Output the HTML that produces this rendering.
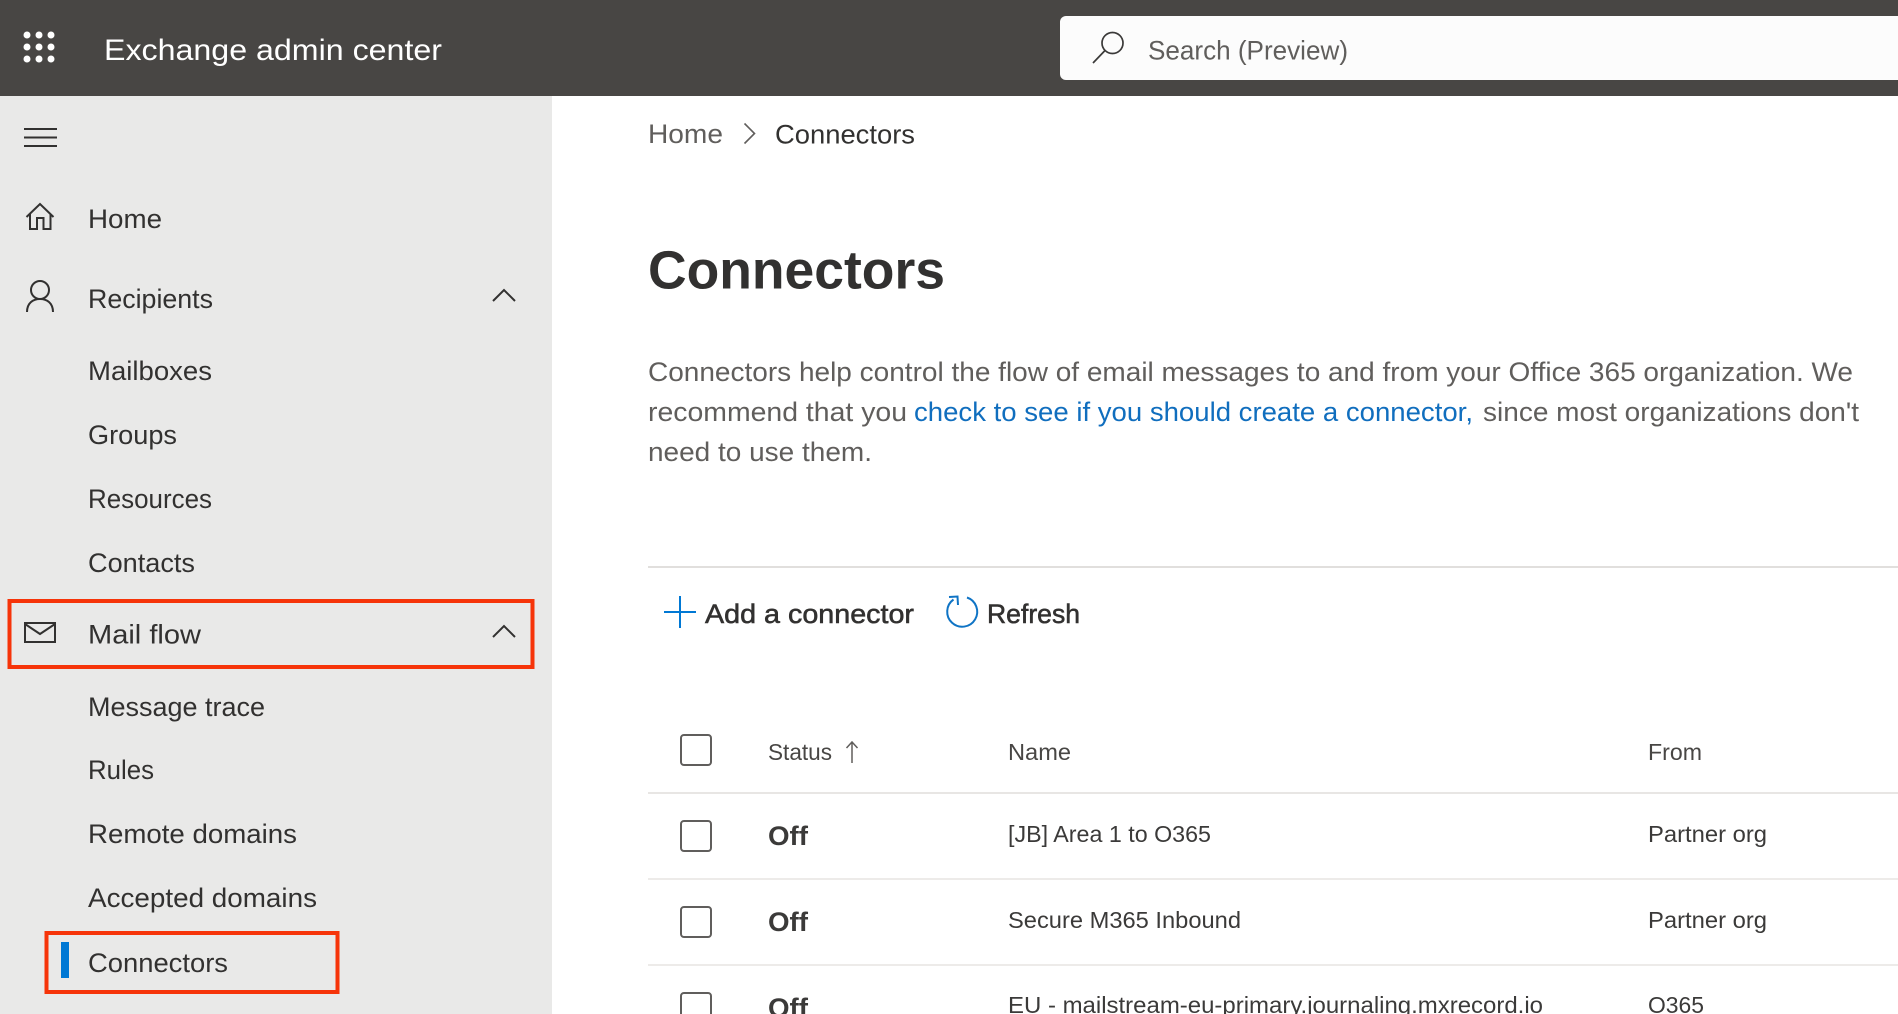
<!DOCTYPE html>
<html lang="en">
<head>
<meta charset="utf-8">
<title>Exchange admin center - Connectors</title>
<style>
html,body{margin:0;padding:0;width:1898px;height:1014px;overflow:hidden;background:#fff}
svg{display:block;position:absolute;left:0;top:0}
text{font-family:"Liberation Sans",Arial,sans-serif;white-space:pre}
.n{font-size:27px;fill:#323130}
.p{font-size:27px;fill:#605e5c}
.l{font-size:27px;fill:#106ebe}
.t{font-size:23.5px;fill:#3b3a39}
.h{font-size:23.5px;fill:#484644}
.o{font-size:27px;font-weight:bold;fill:#3b3a39}
.a{font-size:27px;fill:#323130;stroke:#323130;stroke-width:.55px}
.i{fill:none;stroke:#323130;stroke-width:2}
.c{fill:#fff;stroke:#605e5c;stroke-width:2}
</style>
</head>
<body>
<svg width="1898" height="1014" viewBox="0 0 1898 1014" xmlns="http://www.w3.org/2000/svg">
<rect width="1898" height="1014" fill="#fff"/>
<rect width="1898" height="96" fill="#484644"/>
<rect y="96" width="552" height="918" fill="#e9e9e8"/>

<!-- waffle -->
<g fill="#fff">
<circle cx="27" cy="35" r="3.5"/><circle cx="39" cy="35" r="3.5"/><circle cx="51" cy="35" r="3.5"/>
<circle cx="27" cy="47" r="3.5"/><circle cx="39" cy="47" r="3.5"/><circle cx="51" cy="47" r="3.5"/>
<circle cx="27" cy="59" r="3.5"/><circle cx="39" cy="59" r="3.5"/><circle cx="51" cy="59" r="3.5"/>
</g>
<text x="104" y="60" font-size="30" fill="#fff" textLength="338" lengthAdjust="spacingAndGlyphs">Exchange admin center</text>

<!-- search -->
<path d="M1898 16H1066a6 6 0 0 0-6 6v52a6 6 0 0 0 6 6h832z" fill="#fcfcfc"/>
<circle cx="1112.5" cy="43" r="10.5" fill="none" stroke="#3b3a39" stroke-width="1.700"/>
<path d="M1105 50.5L1093 63" fill="none" stroke="#3b3a39" stroke-width="1.700"/>
<text x="1148" y="59.500" font-size="27" fill="#605e5c" textLength="200" lengthAdjust="spacingAndGlyphs">Search (Preview)</text>

<!-- hamburger -->
<path d="M24 129H57M24 137.5H57M24 146H57" class="i"/>

<!-- home -->
<path d="M26.5 217L40 204L53.5 217" class="i"/>
<path d="M30 214V229H37V218H43.5V229H50.500V214" class="i"/>
<text class="n" x="88" y="228" textLength="74" lengthAdjust="spacingAndGlyphs">Home</text>

<!-- recipients -->
<circle cx="40" cy="290" r="9" class="i"/>
<path d="M27 312C27 303 33 299 40 299C47 299 53 303 53 312" class="i"/>
<text class="n" x="88" y="308" textLength="125" lengthAdjust="spacingAndGlyphs">Recipients</text>
<path d="M493 301L504 290L515 301" class="i"/>

<text class="n" x="88" y="380" textLength="124" lengthAdjust="spacingAndGlyphs">Mailboxes</text>
<text class="n" x="88" y="444" textLength="89" lengthAdjust="spacingAndGlyphs">Groups</text>
<text class="n" x="88" y="508" textLength="124" lengthAdjust="spacingAndGlyphs">Resources</text>
<text class="n" x="88" y="572" textLength="107" lengthAdjust="spacingAndGlyphs">Contacts</text>

<!-- mail flow -->
<rect x="25" y="623" width="30" height="19" class="i"/>
<path d="M25 624L40 634L55 624" class="i"/>
<text class="n" x="88" y="643.500" textLength="113" lengthAdjust="spacingAndGlyphs">Mail flow</text>
<path d="M493 637L504 626L515 637" class="i"/>

<text class="n" x="88" y="716" textLength="177" lengthAdjust="spacingAndGlyphs">Message trace</text>
<text class="n" x="88" y="779" textLength="66" lengthAdjust="spacingAndGlyphs">Rules</text>
<text class="n" x="88" y="843" textLength="209" lengthAdjust="spacingAndGlyphs">Remote domains</text>
<text class="n" x="88" y="907" textLength="229" lengthAdjust="spacingAndGlyphs">Accepted domains</text>
<rect x="61" y="942" width="8" height="36" fill="#0078d4"/>
<text class="n" x="88" y="972" textLength="140" lengthAdjust="spacingAndGlyphs">Connectors</text>

<!-- red highlights -->
<rect x="9.500" y="601" width="523" height="66" fill="none" stroke="#f63409" stroke-width="4"/>
<rect x="46.500" y="933" width="291" height="59" fill="none" stroke="#f63409" stroke-width="4"/>

<!-- breadcrumb -->
<text x="648" y="143" font-size="27" fill="#605e5c" textLength="75" lengthAdjust="spacingAndGlyphs">Home</text>
<path d="M744.500 123.500L754.500 133.500L744.500 143.500" fill="none" stroke="#605e5c" stroke-width="1.600"/>
<text class="n" x="775" y="143.500" textLength="140" lengthAdjust="spacingAndGlyphs">Connectors</text>

<!-- heading -->
<text x="648" y="288.500" font-size="54" font-weight="bold" fill="#323130" textLength="297" lengthAdjust="spacingAndGlyphs">Connectors</text>

<!-- description -->
<text class="p" x="648" y="381" textLength="1205" lengthAdjust="spacingAndGlyphs">Connectors help control the flow of email messages to and from your Office 365 organization. We</text>
<text class="p" x="648" y="421" textLength="259" lengthAdjust="spacingAndGlyphs">recommend that you</text>
<text class="l" x="914" y="421" textLength="559" lengthAdjust="spacingAndGlyphs">check to see if you should create a connector,</text>
<text class="p" x="1483" y="421" textLength="376" lengthAdjust="spacingAndGlyphs">since most organizations don't</text>
<text class="p" x="648" y="461" textLength="224" lengthAdjust="spacingAndGlyphs">need to use them.</text>

<rect x="648" y="566" width="1250" height="2" fill="#e1dfdd"/>

<!-- command bar -->
<path d="M664 612H696M680 596V628" fill="none" stroke="#0078d4" stroke-width="2"/>
<text class="a" x="705" y="623" textLength="209" lengthAdjust="spacingAndGlyphs">Add a connector</text>
<path d="M967 597.500A15 15 0 1 1 953.500 599.500" fill="none" stroke="#0f74c5" stroke-width="2"/>
<path d="M949 597L957.500 596.500L958 605" fill="none" stroke="#0f74c5" stroke-width="2"/>
<text class="a" x="987" y="623" textLength="93" lengthAdjust="spacingAndGlyphs">Refresh</text>

<!-- table header -->
<rect x="681" y="735" width="30" height="30" rx="3" class="c"/>
<text class="h" x="768" y="760" textLength="64" lengthAdjust="spacingAndGlyphs">Status</text>
<path d="M852 763V742M846.500 748L852 742L857.500 748" fill="none" stroke="#605e5c" stroke-width="1.500"/>
<text class="h" x="1008" y="760" textLength="63" lengthAdjust="spacingAndGlyphs">Name</text>
<text class="h" x="1648" y="760" textLength="54" lengthAdjust="spacingAndGlyphs">From</text>
<rect x="648" y="792" width="1250" height="2" fill="#e8e6e4"/>

<!-- row 1 -->
<rect x="681" y="821" width="30" height="30" rx="3" class="c"/>
<text class="o" x="768" y="845" textLength="40" lengthAdjust="spacingAndGlyphs">Off</text>
<text class="t" x="1008" y="842" textLength="203" lengthAdjust="spacingAndGlyphs">[JB] Area 1 to O365</text>
<text class="t" x="1648" y="842" textLength="119" lengthAdjust="spacingAndGlyphs">Partner org</text>
<rect x="648" y="878" width="1250" height="2" fill="#edebe9"/>

<!-- row 2 -->
<rect x="681" y="907" width="30" height="30" rx="3" class="c"/>
<text class="o" x="768" y="931" textLength="40" lengthAdjust="spacingAndGlyphs">Off</text>
<text class="t" x="1008" y="928" textLength="233" lengthAdjust="spacingAndGlyphs">Secure M365 Inbound</text>
<text class="t" x="1648" y="928" textLength="119" lengthAdjust="spacingAndGlyphs">Partner org</text>
<rect x="648" y="964" width="1250" height="2" fill="#edebe9"/>

<!-- row 3 -->
<rect x="681" y="993" width="30" height="30" rx="3" class="c"/>
<text class="o" x="768" y="1017" textLength="40" lengthAdjust="spacingAndGlyphs">Off</text>
<text class="t" x="1008" y="1013" textLength="535" lengthAdjust="spacingAndGlyphs">EU - mailstream-eu-primary.journaling.mxrecord.io</text>
<text class="t" x="1648" y="1013" textLength="56" lengthAdjust="spacingAndGlyphs">O365</text>
</svg>
</body>
</html>
